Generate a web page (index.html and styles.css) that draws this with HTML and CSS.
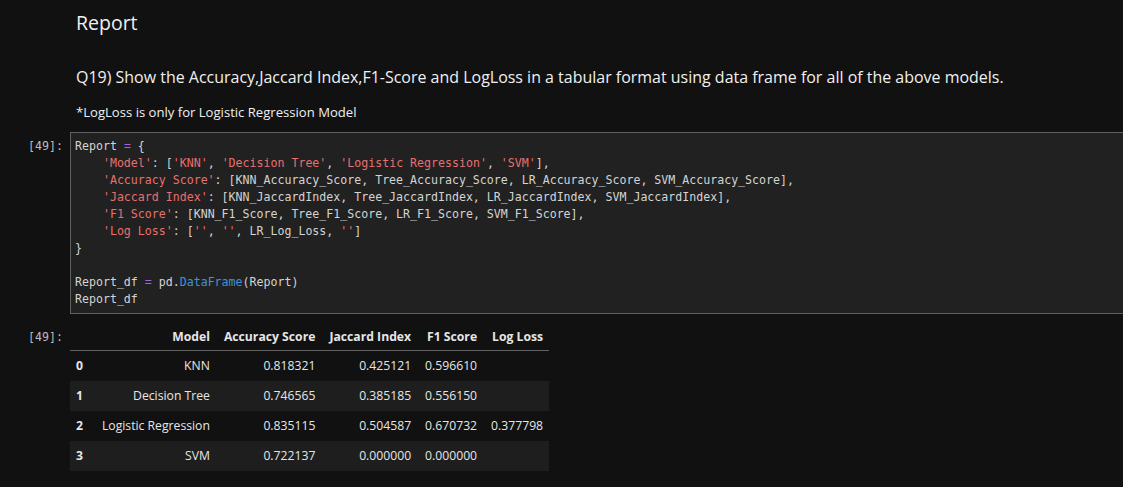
FILE: index.html
```html
<!DOCTYPE html>
<html>
<head>
<meta charset="utf-8">
<link rel="stylesheet" href="styles.css">
</head>
<body>
<div class="notebook">
  <div class="cell md-cell">
    <div class="prompt"></div>
    <div class="md">
      <h2 class="md-h">Report</h2>
      <p class="md-q">Q19) Show the Accuracy,Jaccard Index,F1-Score and LogLoss in a tabular format using data frame for all of the above models.</p>
      <p class="md-note">*LogLoss is only for Logistic Regression Model</p>
    </div>
  </div>

  <div class="cell code-cell">
    <div class="prompt">[49]:</div>
    <div class="code">
      <div class="ln">Report <span class="op">=</span> {</div>
      <div class="ln">    <span class="str">'Model'</span>: [<span class="str">'KNN'</span>, <span class="str">'Decision Tree'</span>, <span class="str">'Logistic Regression'</span>, <span class="str">'SVM'</span>],</div>
      <div class="ln">    <span class="str">'Accuracy Score'</span>: [KNN_Accuracy_Score, Tree_Accuracy_Score, LR_Accuracy_Score, SVM_Accuracy_Score],</div>
      <div class="ln">    <span class="str">'Jaccard Index'</span>: [KNN_JaccardIndex, Tree_JaccardIndex, LR_JaccardIndex, SVM_JaccardIndex],</div>
      <div class="ln">    <span class="str">'F1 Score'</span>: [KNN_F1_Score, Tree_F1_Score, LR_F1_Score, SVM_F1_Score],</div>
      <div class="ln">    <span class="str">'Log Loss'</span>: [<span class="str">''</span>, <span class="str">''</span>, LR_Log_Loss, <span class="str">''</span>]</div>
      <div class="ln">}</div>
      <div class="ln"> </div>
      <div class="ln">Report_df <span class="op">=</span> pd.<span class="fn">DataFrame</span>(Report)</div>
      <div class="ln">Report_df</div>
    </div>
  </div>

  <div class="cell out-cell">
    <div class="prompt out-prompt">[49]:</div>
    <table class="df">
      <thead>
        <tr><th class="c-idx"></th><th class="c-model">Model</th><th>Accuracy Score</th><th>Jaccard Index</th><th>F1 Score</th><th>Log Loss</th></tr>
      </thead>
      <tbody>
        <tr><th class="c-idx">0</th><td class="c-model">KNN</td><td>0.818321</td><td>0.425121</td><td>0.596610</td><td></td></tr>
        <tr><th class="c-idx">1</th><td class="c-model">Decision Tree</td><td>0.746565</td><td>0.385185</td><td>0.556150</td><td></td></tr>
        <tr><th class="c-idx">2</th><td class="c-model">Logistic Regression</td><td>0.835115</td><td>0.504587</td><td>0.670732</td><td>0.377798</td></tr>
        <tr><th class="c-idx">3</th><td class="c-model">SVM</td><td>0.722137</td><td>0.000000</td><td>0.000000</td><td></td></tr>
      </tbody>
    </table>
  </div>
</div>
</body>
</html>
```

FILE: styles.css
```css
html, body {
  margin: 0;
  padding: 0;
  background: #111111;
  color: #e6e6e6;
  font-family: "Open Sans", "Noto Sans", sans-serif;
}

.notebook {
  display: flex;
  flex-direction: column;
}

.cell {
  display: flex;
  align-items: flex-start;
}

.prompt {
  width: 63px;
  flex: 0 0 63px;
  padding-right: 7px;
  text-align: right;
  font-family: "DejaVu Sans Mono", monospace;
  font-size: 11.6px;
  line-height: 17px;
  color: #bdbdbd;
}

.md {
  padding-left: 6px;
}

.md-h {
  margin: 8px 0 0 0;
  font-size: 19.5px;
  font-weight: 400;
  line-height: 30px;
  color: #f0f0f0;
}

.md-q {
  margin: 28px 0 0 0;
  font-size: 15.97px;
  line-height: 22px;
  color: #f0f0f0;
}

.md-note {
  margin: 14px 0 0 0;
  font-size: 13.1px;
  line-height: 20px;
  color: #f0f0f0;
}

.code-cell {
  margin-top: 10px;
}

.code-cell .prompt {
  padding-top: 6px;
}

.code {
  flex: 1;
  min-width: 0;
  border: 1px solid #616161;
  border-right: none;
  background: #212121;
  padding: 5px 4px 5px 4px;
  font-family: "DejaVu Sans Mono", monospace;
  font-size: 11.6px;
  line-height: 17px;
  color: #d4d4d4;
}

.ln {
  height: 17px;
  white-space: pre;
}

.op { color: #b15ee0; }
.str { color: #e8706e; }
.fn { color: #3f93d8; }

.out-cell {
  margin-top: 9px;
}

.out-prompt {
  padding-top: 6px;
}

.df {
  border-collapse: collapse;
  font-size: 12.2px;
  color: #e6e6e6;
}

.df th, .df td {
  padding: 0 6px 0 8px;
  text-align: right;
  white-space: nowrap;
}

.df .c-idx {
  padding-left: 6px;
  text-align: left;
}

.df .c-model {
  padding-left: 13px;
}

.df thead th {
  font-weight: 700;
  height: 27px;
  border-bottom: 1px solid #616161;
  vertical-align: middle;
}

.df tbody tr {
  height: 30px;
}

.df tbody th {
  font-weight: 700;
}

.df tbody tr:nth-child(even) {
  background: #1e1e1e;
}
```
